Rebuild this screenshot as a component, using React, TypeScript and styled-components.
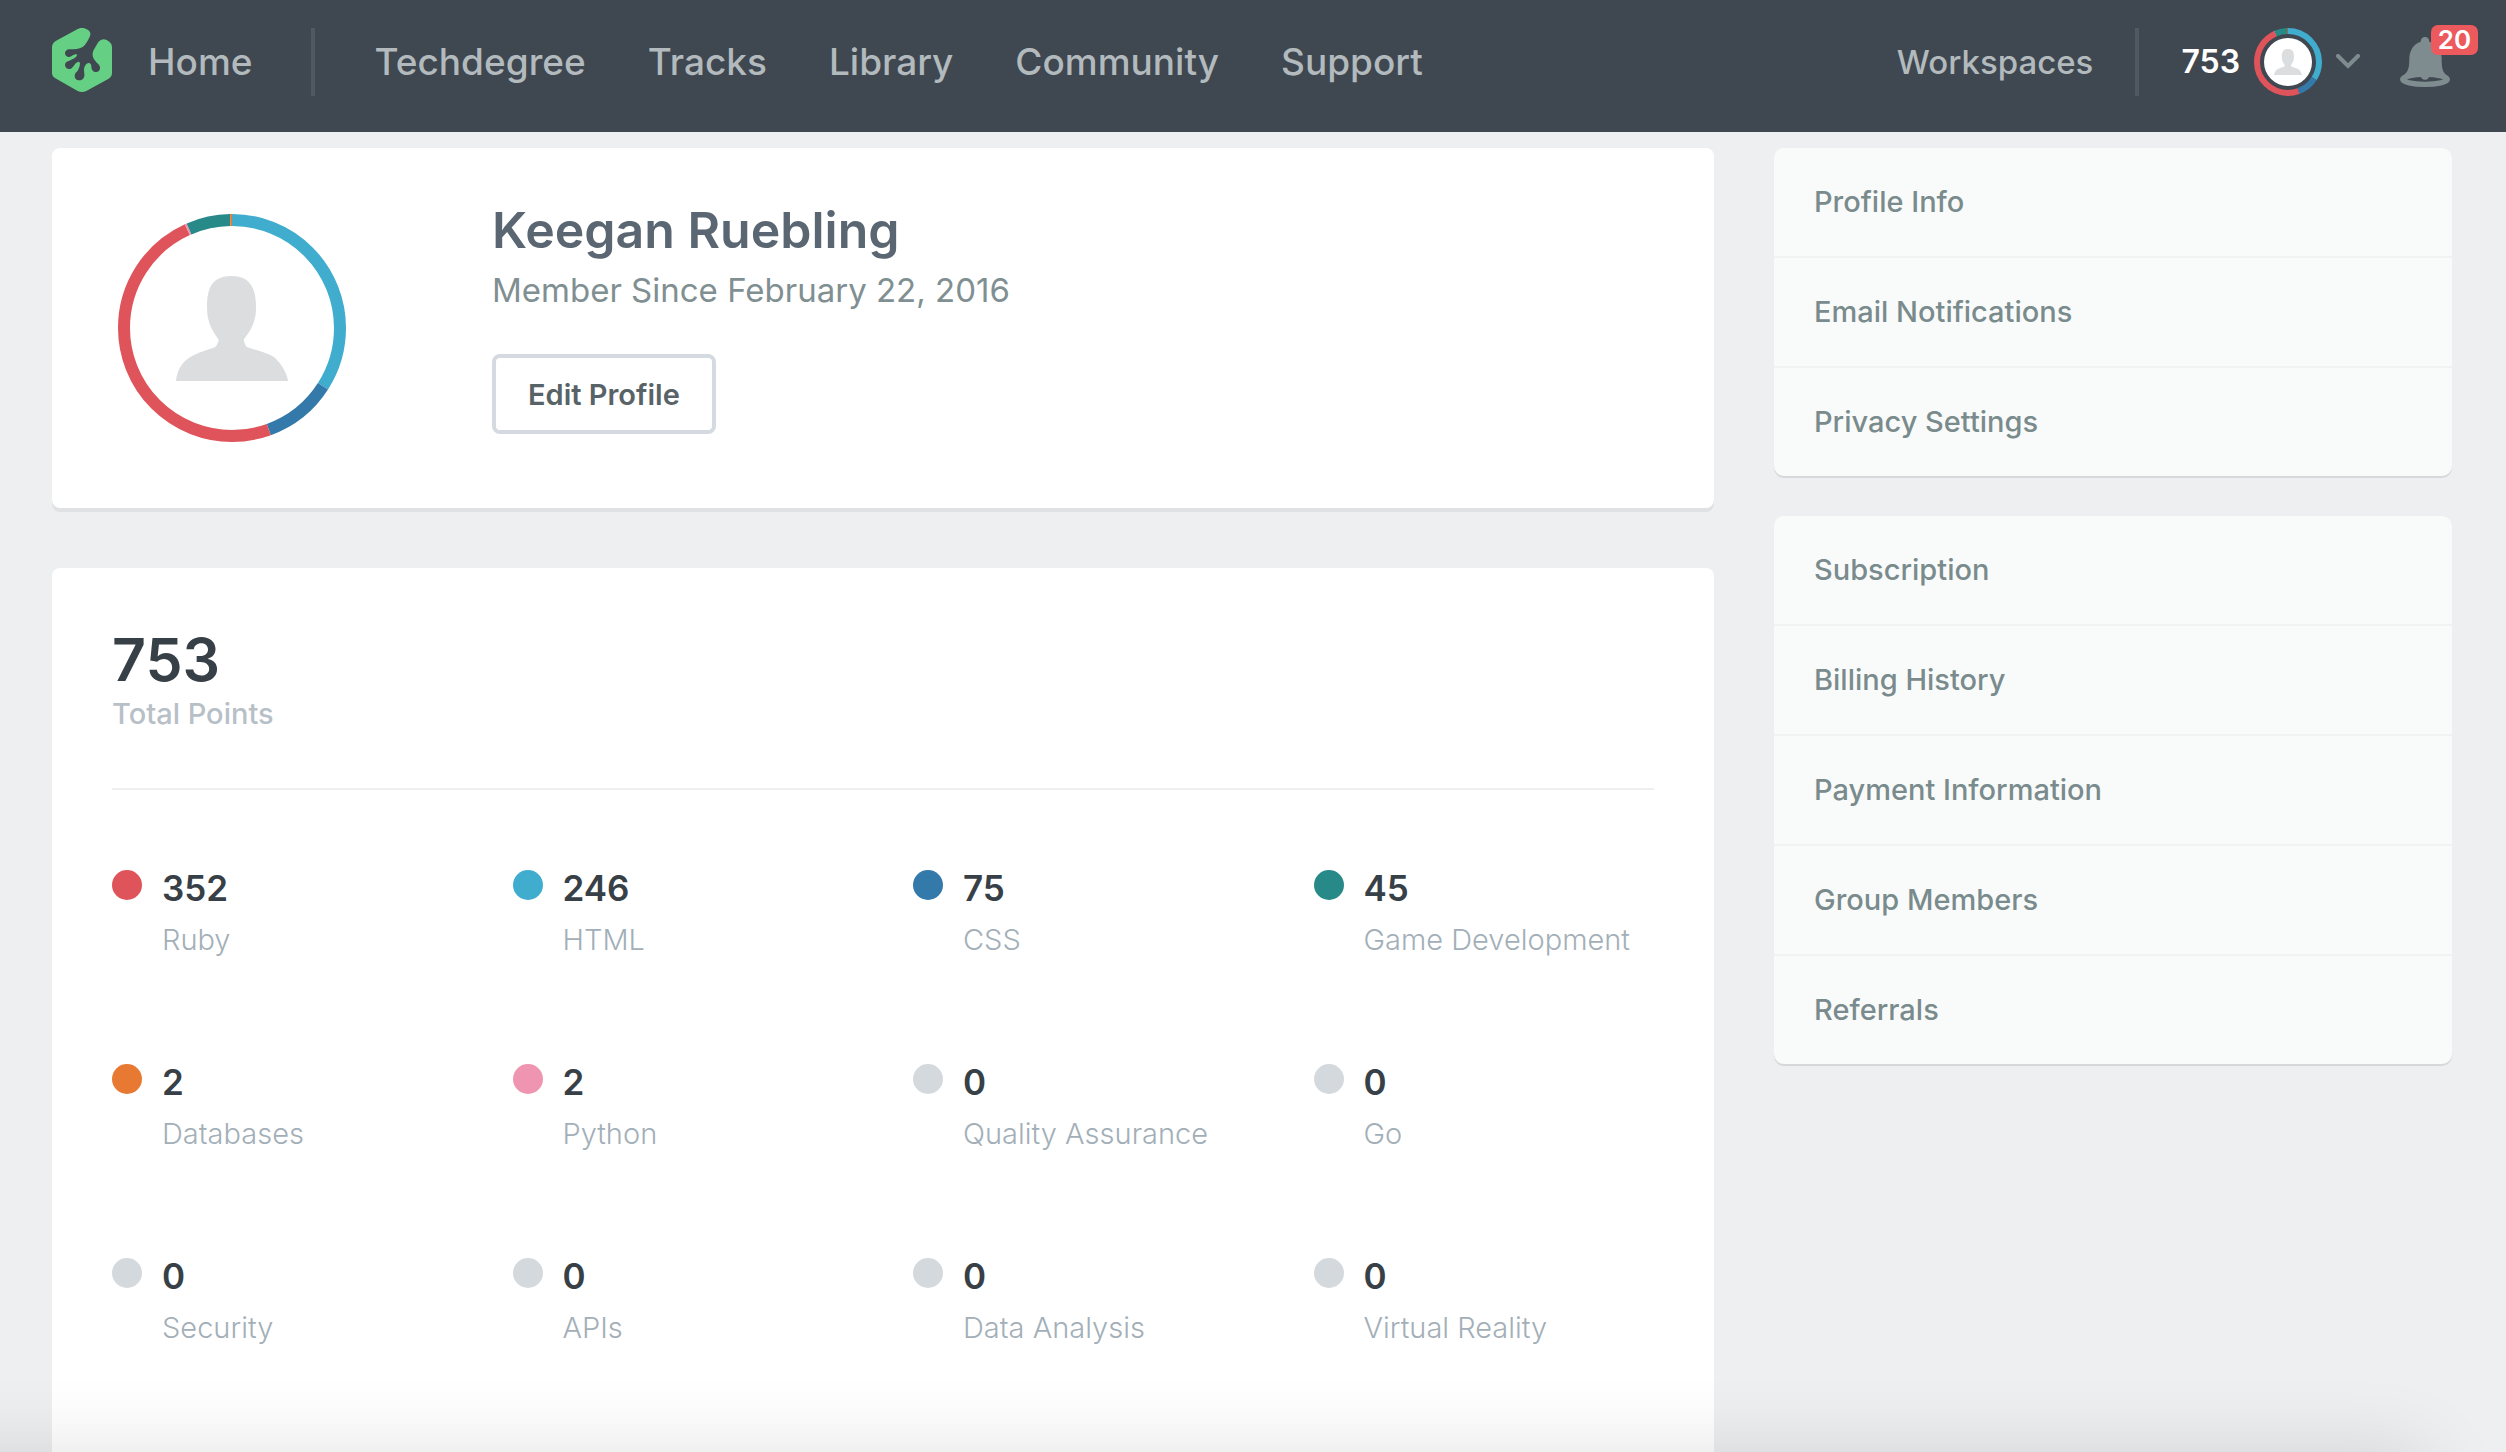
import React from "react";
import styled, { createGlobalStyle } from "styled-components";

const GlobalStyle = createGlobalStyle`
  *, *::before, *::after { box-sizing: border-box; }
  body {
    margin: 0;
    background: #edeff0;
    font-family: Inter, "Open Sans", sans-serif;
    -webkit-font-smoothing: antialiased;
  }
  h1, p, ul { margin: 0; padding: 0; }
  ul { list-style: none; }
  a { color: inherit; text-decoration: none; }
  button { font: inherit; color: inherit; background: none; border: 0; padding: 0; cursor: pointer; }
  svg { display: block; flex: none; }
`;

const Page = styled.div`
  min-height: 100vh;
  display: flex;
  flex-direction: column;
`;

const TopBar = styled.header`
  display: flex;
  align-items: center;
  justify-content: space-between;
  padding: 28px 56px 36px 52px;
  background: #3f4750;
  color: #b2babd;
  font-weight: 500;
  white-space: nowrap;
`;

const MainNav = styled.nav`
  display: flex;
  align-items: center;
  font-size: 37px;
  line-height: 68px;
`;

const HomeLink = styled.a`
  display: flex;
  align-items: flex-start;
  gap: 36px;
`;

const NavList = styled.ul`
  display: flex;
  gap: 62px;
`;

const Separator = styled.span<{ $before: number; $after: number }>`
  width: 4px;
  height: 68px;
  margin: 0 ${(p) => p.$after}px 0 ${(p) => p.$before}px;
  background: #505862;
`;

const UserNav = styled.nav`
  display: flex;
  align-items: center;
  font-size: 33px;
  line-height: 68px;
`;

const AccountButton = styled.button`
  display: flex;
  align-items: center;
  gap: 14px;
  color: #fff;
  font-size: 32px;
  font-weight: 600;
`;

const BellButton = styled.button`
  position: relative;
  margin-left: 40px;
`;

const Badge = styled.span`
  position: absolute;
  top: -12px;
  left: 31px;
  width: 47px;
  border-radius: 7px;
  background: #ed5a5e;
  color: #fff;
  font-size: 26px;
  font-weight: 600;
  line-height: 30px;
  text-align: center;
`;

const RingFrame = styled.span<{ $size: number }>`
  display: grid;
  place-items: center;
  flex: none;
  width: ${(p) => p.$size}px;
  height: ${(p) => p.$size}px;
  & > * { grid-area: 1 / 1; }
`;

const AvatarDisc = styled.span<{ $size: number }>`
  display: grid;
  place-items: center;
  width: ${(p) => p.$size}px;
  height: ${(p) => p.$size}px;
  border-radius: 50%;
  background: #fff;
`;

const Body = styled.div`
  flex: 1;
  display: grid;
  grid-template-columns: minmax(0, 1fr) 678px;
  gap: 60px;
  padding: 16px 54px 0 52px;
`;

const Content = styled.main`
  display: flex;
  flex-direction: column;
  gap: 60px;
`;

const ProfileCard = styled.section`
  display: flex;
  align-items: center;
  gap: 146px;
  padding: 66px;
  border-radius: 8px;
  background: #fff;
  box-shadow: 0 4px 0 #dfe1e3;
`;

const Details = styled.div`
  display: flex;
  flex-direction: column;
  align-items: flex-start;
  margin: -12px 0 8px;
`;

const Name = styled.h1`
  font-size: 50px;
  font-weight: 600;
  line-height: 56px;
  color: #5a6772;
`;

const Since = styled.p`
  margin-top: 8px;
  font-size: 33px;
  line-height: 48px;
  color: #7f8f92;
`;

const EditButton = styled.button`
  margin-top: 40px;
  height: 80px;
  padding: 0 32px;
  border: 4px solid #d4dadf;
  border-radius: 8px;
  color: #576366;
  font-size: 29px;
  font-weight: 600;
`;

const PointsCard = styled.section`
  flex: 1;
  padding: 60px 60px 106px;
  border-radius: 8px 8px 0 0;
  background: #fff;
`;

const Total = styled.div`
  display: flex;
  flex-direction: column;
  gap: 6px;
  padding-bottom: 58px;
  border-bottom: 2px solid #edeff0;
`;

const TotalValue = styled.p`
  font-size: 59px;
  font-weight: 600;
  line-height: 64px;
  color: #384047;
`;

const TotalLabel = styled.p`
  font-size: 29px;
  font-weight: 500;
  line-height: 32px;
  color: #b7c0c7;
`;

const StatGrid = styled.ul`
  display: grid;
  grid-template-columns: repeat(4, minmax(0, 1fr));
  gap: 106px 60px;
  margin-top: 78px;
`;

const Stat = styled.li`
  display: flex;
  align-items: flex-start;
  gap: 20px;
`;

const Dot = styled.span<{ $color: string }>`
  flex: none;
  width: 30px;
  height: 30px;
  margin-top: 2px;
  border-radius: 50%;
  background: ${(p) => p.$color};
`;

const StatValue = styled.p`
  font-size: 35px;
  font-weight: 600;
  line-height: 40px;
  color: #384047;
`;

const StatLabel = styled.p`
  margin-top: 16px;
  font-size: 29px;
  font-weight: 300;
  line-height: 32px;
  white-space: nowrap;
  color: #a3afb8;
`;

const Sidebar = styled.aside`
  display: flex;
  flex-direction: column;
  gap: 40px;
`;

const Menu = styled.ul`
  border-radius: 10px;
  background: #f9fbfa;
  box-shadow: 0 2px 0 #d6d9d9;
`;

const MenuItem = styled.li`
  & + & { border-top: 2px solid #f1f3f3; }
`;

const MenuLink = styled.a`
  display: block;
  padding: 0 40px;
  font-size: 29px;
  font-weight: 500;
  line-height: 108px;
  color: #7a8b8d;
`;

const BottomShade = styled.div`
  position: fixed;
  left: -100px;
  right: 80px;
  bottom: -100px;
  height: 100px;
  box-shadow: 0 0 80px rgba(0, 0, 0, 0.12);
  pointer-events: none;
`;

const segments = [
  { color: "#40acce", value: 246 },
  { color: "#3379a9", value: 75 },
  { color: "#df545a", value: 352 },
  { color: "#ef94b1", value: 2 },
  { color: "#288989", value: 45 },
  { color: "#e87932", value: 2 },
];

const segmentTotal = segments.reduce((sum, s) => sum + s.value, 0);

function PointsRing({ size, stroke }: { size: number; stroke: number }) {
  let start = 0;
  return (
    <svg width={size} height={size} viewBox={`0 0 ${size} ${size}`} aria-hidden="true">
      <g transform={`rotate(-90 ${size / 2} ${size / 2})`} fill="none" strokeWidth={stroke}>
        {segments.map((s) => {
          const offset = -start;
          start += s.value;
          return (
            <circle
              key={s.color}
              cx={size / 2}
              cy={size / 2}
              r={(size - stroke) / 2}
              pathLength={segmentTotal}
              stroke={s.color}
              strokeDasharray={`${s.value} ${segmentTotal - s.value}`}
              strokeDashoffset={offset}
            />
          );
        })}
      </g>
    </svg>
  );
}

function Silhouette({ width }: { width: number }) {
  return (
    <svg width={width} height={(width * 315) / 336} viewBox="258 258 336 315" aria-hidden="true">
      <path
        fill="#dbdddf"
        d="M258 573C260 545 276 516 300 502C326 486 350 481 376 471C382 464 385 456 386 449C368 424 351 398 351 355C351 310 356 258 424 258C492 258 498 312 498 355C498 398 480 425 461 449C463 457 465 464 470 471C500 481 530 488 553 502C575 522 592 553 594 573Z"
      />
    </svg>
  );
}

function Logo() {
  return (
    <svg width="60" height="64" viewBox="66 84 180 192" aria-hidden="true">
      <path
        fill="#65cf83"
        d="M66 142Q66 130 77 123L143 87Q156 80 169 87Q185 95 180 108C176 118 168 134 158 141C147 148 134 148 120 148C111 147 105 153 105 160C105 167 111 171 117 171C126 171 128 163 140 163C144 168 132 177 118 182C108 184 105 189 105 196C106 203 112 208 119 207C131 205 132 189 145 185C154 184 149 203 142 214C133 221 132 230 137 237C145 245 162 241 163 227C164 216 158 207 167 194C176 184 184 190 184 198C184 210 190 216 198 216C206 216 211 210 210 202C208 192 200 190 192 178C186 166 187 158 191 150L205 126Q215 114 230 120L238 125Q246 131 246 140V219Q246 230 236 236L169 273Q156 279 143 273L76 235Q66 229 66 219Z"
      />
    </svg>
  );
}

function Bell() {
  return (
    <svg width="50" height="50" viewBox="840 108 150 150" aria-hidden="true">
      <ellipse cx="915" cy="235" rx="67" ry="15" fill="none" stroke="#7f8c8f" strokeWidth="16" />
      <path
        fill="#7f8c8f"
        d="M846 228C866 212 868 200 868 172C868 148 882 128 902 122C902 103 928 103 928 122C950 128 965 148 965 172C965 200 966 212 984 228Q950 225 915 225Q880 225 846 228Z"
      />
      <circle cx="915" cy="224" r="12" fill="#7f8c8f" />
    </svg>
  );
}

function Chevron() {
  return (
    <svg width="24" height="16" viewBox="0 0 24 16" aria-hidden="true">
      <path d="M2 2L12 12L22 2" fill="none" stroke="#7f8c8f" strokeWidth="4" strokeLinecap="round" />
    </svg>
  );
}

const navLinks = ["Techdegree", "Tracks", "Library", "Community", "Support"];

const empty = "#d4d9dd";
const stats = [
  { label: "Ruby", value: 352, color: "#df545a" },
  { label: "HTML", value: 246, color: "#40acce" },
  { label: "CSS", value: 75, color: "#3379a9" },
  { label: "Game Development", value: 45, color: "#288989" },
  { label: "Databases", value: 2, color: "#e87932" },
  { label: "Python", value: 2, color: "#ef94b1" },
  { label: "Quality Assurance", value: 0, color: empty },
  { label: "Go", value: 0, color: empty },
  { label: "Security", value: 0, color: empty },
  { label: "APIs", value: 0, color: empty },
  { label: "Data Analysis", value: 0, color: empty },
  { label: "Virtual Reality", value: 0, color: empty },
];

const menus = [
  ["Profile Info", "Email Notifications", "Privacy Settings"],
  ["Subscription", "Billing History", "Payment Information", "Group Members", "Referrals"],
];

export default function App() {
  return (
    <Page>
      <GlobalStyle />
      <TopBar>
        <MainNav aria-label="Main">
          <HomeLink href="#home">
            <Logo />
            Home
          </HomeLink>
          <Separator $before={58} $after={60} />
          <NavList>
            {navLinks.map((label) => (
              <li key={label}>
                <a href={`#${label.toLowerCase()}`}>{label}</a>
              </li>
            ))}
          </NavList>
        </MainNav>
        <UserNav aria-label="Account">
          <a href="#workspaces">Workspaces</a>
          <Separator $before={42} $after={42} />
          <AccountButton type="button" aria-haspopup="menu">
            753
            <RingFrame $size={68}>
              <PointsRing size={68} stroke={6} />
              <AvatarDisc $size={48}>
                <Silhouette width={28} />
              </AvatarDisc>
            </RingFrame>
            <Chevron />
          </AccountButton>
          <BellButton type="button" aria-label="Notifications">
            <Bell />
            <Badge>20</Badge>
          </BellButton>
        </UserNav>
      </TopBar>
      <Body>
        <Content>
          <ProfileCard>
            <RingFrame $size={228}>
              <PointsRing size={228} stroke={12} />
              <Silhouette width={112} />
            </RingFrame>
            <Details>
              <Name>Keegan Ruebling</Name>
              <Since>Member Since February 22, 2016</Since>
              <EditButton type="button">Edit Profile</EditButton>
            </Details>
          </ProfileCard>
          <PointsCard>
            <Total>
              <TotalValue>753</TotalValue>
              <TotalLabel>Total Points</TotalLabel>
            </Total>
            <StatGrid>
              {stats.map((s) => (
                <Stat key={s.label}>
                  <Dot $color={s.color} />
                  <div>
                    <StatValue>{s.value}</StatValue>
                    <StatLabel>{s.label}</StatLabel>
                  </div>
                </Stat>
              ))}
            </StatGrid>
          </PointsCard>
        </Content>
        <Sidebar>
          {menus.map((items) => (
            <Menu key={items[0]}>
              {items.map((item) => (
                <MenuItem key={item}>
                  <MenuLink href={`#${item.toLowerCase().replace(/ /g, "-")}`}>{item}</MenuLink>
                </MenuItem>
              ))}
            </Menu>
          ))}
        </Sidebar>
      </Body>
      <BottomShade />
    </Page>
  );
}
